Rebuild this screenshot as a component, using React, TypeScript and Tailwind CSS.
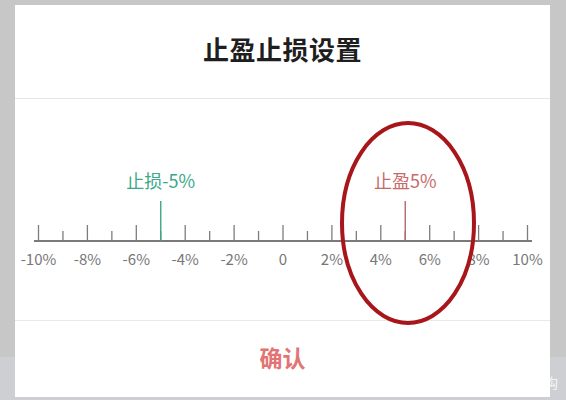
const ticks = Array.from({ length: 21 }, (_, i) => i - 10);

// x of a percentage on the ruler, inside the modal
const px = (v: number) => 283 - 15 + v * 24.45;

function Ruler() {
  const base = 142; // baseline y inside the middle section
  return (
    <svg width="535" height="222" className="block">
      <line x1={19} y1={base} x2={517} y2={base} stroke="#7a7a7a" strokeWidth="2" />
      {ticks.map((v) => (
        <line
          key={v}
          x1={px(v)}
          x2={px(v)}
          y1={v % 2 === 0 ? base - 16 : base - 10}
          y2={base}
          stroke="#7d7d7d"
          strokeWidth="1.3"
        />
      ))}
      <line x1={px(-5)} x2={px(-5)} y1={base - 40} y2={base} stroke="#3aa88a" strokeWidth="1.4" />
      <line x1={px(5)} x2={px(5)} y1={base - 40} y2={base} stroke="#b06a6a" strokeWidth="1.4" />
      <text
        x={px(-5)}
        y={89}
        textAnchor="middle"
        fontSize="18"
        fill="#3aa88a"
        fontFamily="'Noto Sans CJK SC', sans-serif"
      >
        止损-5%
      </text>
      <text
        x={px(5)}
        y={89}
        textAnchor="middle"
        fontSize="18"
        fill="#c86a6a"
        fontFamily="'Noto Sans CJK SC', sans-serif"
      >
        止盈5%
      </text>
      {ticks
        .filter((v) => v % 2 === 0)
        .map((v) => (
          <text
            key={v}
            x={px(v)}
            y={166}
            textAnchor="middle"
            fontSize="15"
            fill="#777777"
            fontFamily="'Noto Sans CJK SC', sans-serif"
          >
            {v === 0 ? "0" : `${v}%`}
          </text>
        ))}
    </svg>
  );
}

export default function App() {
  return (
    <div className="relative w-[566px] h-[400px] overflow-hidden pt-[5px] pl-[15px] bg-[linear-gradient(to_bottom,#c7c7c7_357px,#cecfd2_357px)] font-['Noto_Sans_CJK_SC',sans-serif]">
      <div className="relative w-[535px] h-[392px] bg-white flex flex-col">
        <div className="h-[94px] flex items-center justify-center border-b border-[#e6e6e6]">
          <h1 className="text-[26px] font-bold text-[#1e1e1e] tracking-[0.5px] mt-[-6px]">止盈止损设置</h1>
        </div>
        <div className="h-[222px] border-b border-[#e8e8e8]">
          <Ruler />
        </div>
        <div className="flex-1 flex items-center justify-center">
          <button className="text-[23px] font-bold text-[#e27474] mt-[-3px]">确认</button>
        </div>

        {/* hand-drawn highlight circle */}
        <svg className="absolute left-0 top-0 pointer-events-none" width="535" height="392">
          <ellipse cx={393} cy={218} rx={66} ry={100} fill="none" stroke="#a8161b" strokeWidth="4" />
        </svg>
      </div>
      <span className="absolute left-[544px] top-[372px] text-[14px] text-white/80">构</span>
    </div>
  );
}
